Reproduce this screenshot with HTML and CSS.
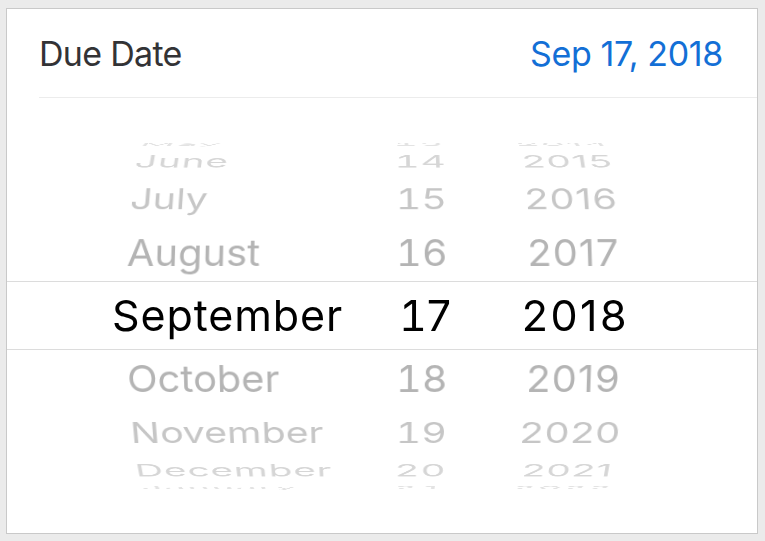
FILE: index.html
```html
<!DOCTYPE html>
<html lang="en">
<head>
<meta charset="utf-8">
<title>Due Date</title>
<link rel="stylesheet" href="styles.css">
</head>
<body>
<div class="card">
  <div class="row">
    <span class="label">Due Date</span>
    <span class="value">Sep 17, 2018</span>
  </div>
  <div class="sep"></div>
  <div class="picker">
    <div class="band"></div>
    <div class="wheels">
      <div class="wheel month">
        <div class="item a4">May</div>
        <div class="item a3">June</div>
        <div class="item a2">July</div>
        <div class="item a1">August</div>
        <div class="sel">September</div>
        <div class="item b1">October</div>
        <div class="item b2">November</div>
        <div class="item b3">December</div>
        <div class="item b4">January</div>
      </div>
      <div class="wheel day">
        <div class="item a4">13</div>
        <div class="item a3">14</div>
        <div class="item a2">15</div>
        <div class="item a1">16</div>
        <div class="sel">17</div>
        <div class="item b1">18</div>
        <div class="item b2">19</div>
        <div class="item b3">20</div>
        <div class="item b4">21</div>
      </div>
      <div class="wheel year">
        <div class="item a4">2014</div>
        <div class="item a3">2015</div>
        <div class="item a2">2016</div>
        <div class="item a1">2017</div>
        <div class="sel">2018</div>
        <div class="item b1">2019</div>
        <div class="item b2">2020</div>
        <div class="item b3">2021</div>
        <div class="item b4">2022</div>
      </div>
    </div>
  </div>
</div>
</body>
</html>
```
FILE: styles.css
```css
* { box-sizing: border-box; }
html, body { margin: 0; }
body {
  background: #ebebeb;
  padding: 8px 0 0 6px;
  font-family: Inter, "Noto Sans", "Liberation Sans", sans-serif;
}
.card {
  width: 752px;
  height: 526px;
  background: #fff;
  border: 1px solid #c9c9c9;
  display: flex;
  flex-direction: column;
}
.row {
  height: 88px;
  display: flex;
  align-items: center;
  justify-content: space-between;
  padding: 0 34px 0 32px;
  font-size: 34px;
}
.label { color: #333336; letter-spacing: -0.7px; }
.value { color: #136fd6; letter-spacing: -0.35px; }
.sep {
  height: 1px;
  margin-left: 32px;
  background: #ececec;
}
.picker {
  height: 435px;
  display: grid;
  overflow: hidden;
  perspective: 2500px;
  perspective-origin: 375px 50%;
}
.band, .wheels { grid-area: 1 / 1; }
.band {
  align-self: center;
  height: 69px;
  border-top: 1px solid #dcdcdc;
  border-bottom: 1px solid #dcdcdc;
}
.wheels {
  display: flex;
  padding-left: 105px;
  transform-style: preserve-3d;
}
.wheel {
  display: grid;
  align-items: center;
  transform-style: preserve-3d;
  --r: 185px;
}
.wheel > * { grid-area: 1 / 1; line-height: 1; white-space: nowrap; }
.month { width: 250px; justify-items: start; }
.day { width: 120px; justify-items: center; font-feature-settings: "tnum"; }
.year { width: 184px; justify-items: center; }
.item {
  font-size: 40px;
  transform: translateZ(calc(-1 * var(--r))) rotateX(var(--a)) translateZ(var(--r));
  backface-visibility: hidden;
}
.month .item { margin-left: 14px; transform-origin: 0 50%; }
.year .item { letter-spacing: 1px; }
.sel {
  font-size: 43px;
  color: #000;
}
.month .sel { letter-spacing: 0.9px; }
.day .sel { margin-left: 6px; letter-spacing: -2px; }
.year .sel { margin-left: 3px; letter-spacing: 2.5px; }
.a1 { --a: 20deg; color: #b4b4b4; }
.a2 { --a: 40deg; color: #c6c6c6; }
.a3 { --a: 60deg; color: #d6d6d6; letter-spacing: 1px; }
.a4 { --a: 80deg; color: #e3e3e3; letter-spacing: 2px; }
.b1 { --a: -20deg; color: #b4b4b4; }
.b2 { --a: -40deg; color: #c6c6c6; }
.b3 { --a: -60deg; color: #d6d6d6; letter-spacing: 1px; }
.b4 { --a: -80deg; color: #e3e3e3; letter-spacing: 2px; }
.year .a3, .year .b3 { letter-spacing: 1px; }
.year .a4, .year .b4 { letter-spacing: 2px; }
```
